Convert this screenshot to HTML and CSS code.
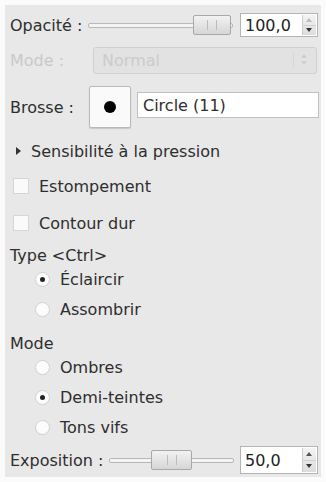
FILE: index.html
```html
<!DOCTYPE html>
<html>
<head>
<meta charset="utf-8">
<link rel="stylesheet" href="styles.css">
</head>
<body>
<div class="panel">
  <div class="row r-opacity">
    <span class="label">Opacité :</span>
    <div class="slider s-op">
      <div class="trough"></div>
      <div class="handle h-op"><span class="grip"></span></div>
    </div>
    <div class="spin">
      <span class="val">100,0</span>
      <div class="arrows"><span class="up"></span><span class="down"></span></div>
    </div>
  </div>
  <div class="row r-mode">
    <span class="label disabled">Mode :</span>
    <div class="combo"><span class="ctext">Normal</span><span class="carrow"></span></div>
  </div>
  <div class="row r-brush">
    <span class="label">Brosse :</span>
    <div class="brushbtn"><span class="dot"></span></div>
    <div class="entry">Circle (11)</div>
  </div>
  <div class="row r-expander">
    <span class="tri"></span><span>Sensibilité à la pression</span>
  </div>
  <div class="row r-check first"><span class="check"></span><span>Estompement</span></div>
  <div class="row r-check"><span class="check"></span><span>Contour dur</span></div>
  <div class="row r-head">Type &lt;Ctrl&gt;</div>
  <div class="row r-radio"><span class="radio on"></span><span>Éclaircir</span></div>
  <div class="row r-radio"><span class="radio"></span><span>Assombrir</span></div>
  <div class="row r-head h2">Mode</div>
  <div class="row r-radio"><span class="radio"></span><span>Ombres</span></div>
  <div class="row r-radio"><span class="radio on"></span><span>Demi-teintes</span></div>
  <div class="row r-radio"><span class="radio"></span><span>Tons vifs</span></div>
  <div class="row r-expo">
    <span class="label">Exposition :</span>
    <div class="slider s-ex">
      <div class="trough"></div>
      <div class="handle h-ex"><span class="grip"></span></div>
    </div>
    <div class="spin sp-ex">
      <span class="val">50,0</span>
      <div class="arrows"><span class="up"></span><span class="down"></span></div>
    </div>
  </div>
</div>
</body>
</html>
```
FILE: styles.css
```css
html, body { margin: 0; padding: 0; background: #fbfbfb; }
body { width: 326px; height: 482px; padding: 5px; box-sizing: border-box; }
.panel {
  background: #e8e8e8;
  height: 472px;
  box-sizing: border-box;
  padding: 8px 2px 0 5px;
  font-family: "DejaVu Sans", sans-serif;
  font-size: 16px;
  color: #2e2e2e;
  display: flex;
  flex-direction: column;
}
.row { display: flex; align-items: center; }
.label { white-space: nowrap; }
.disabled { color: #c8c8c8; }
.r-opacity { height: 24px; }
.slider { position: relative; height: 20px; }
.s-op { width: 145px; margin-left: 6px; }
.s-ex { width: 125px; margin-left: 6px; }
.trough {
  position: absolute; left: 0; right: 0; top: 8px; height: 3px;
  border: 1px solid #b8b8b8; background: #f4f4f4; border-radius: 2px;
}
.handle {
  position: absolute; top: 0; height: 18px;
  border: 1px solid #a8a8a8; border-radius: 2px;
  background: linear-gradient(#f2f2f2, #d6d6d6);
  display: flex; align-items: center; justify-content: center;
}
.h-op { left: 105px; width: 36px; }
.h-ex { left: 42px; width: 39px; }
.grip { width: 8px; height: 10px; border-left: 1px solid #bbb; border-right: 1px solid #bbb; }
.spin {
  margin-left: auto; width: 78px; height: 24px; box-sizing: border-box;
  border: 1px solid #b4b4b4; background: #fff;
  display: flex; align-items: center; margin-right: 1px;
}
.sp-ex { height: 28px; }
.val { padding-left: 4px; flex: 1; color: #222; }
.arrows { width: 13px; align-self: stretch; display: flex; flex-direction: column; margin: 1px 1px 1px 0;
  background: linear-gradient(#f4f4f4, #dcdcdc); border-left: 1px solid #ccc; }
.arrows span { flex: 1; position: relative; }
.arrows .up { border-bottom: 1px solid #d0d0d0; }
.arrows .up::after { content: ""; position: absolute; left: 3px; top: 50%; margin-top: -2px;
  border-left: 3px solid transparent; border-right: 3px solid transparent; border-bottom: 4px solid #555; }
.arrows .down::after { content: ""; position: absolute; left: 3px; top: 50%; margin-top: -2px;
  border-left: 3px solid transparent; border-right: 3px solid transparent; border-top: 4px solid #333; }
.r-opacity .arrows .up::after { border-bottom-color: #bbb; }
.r-mode { height: 28px; margin-top: 9px; }
.combo {
  margin-left: 29px; flex: 1; height: 27px; box-sizing: border-box;
  border: 1px solid #d0d0d0; border-radius: 3px; background: #e2e2e2;
  display: flex; align-items: center; padding-left: 8px; margin-right: 2px;
}
.ctext { color: #cbcbcb; flex: 1; }
.carrow { width: 8px; height: 14px; margin-right: 8px; border-left: 1px solid #d6d6d6; padding-left: 6px; position: relative; }
.carrow::before { content: ""; position: absolute; left: 7px; top: 1px;
  border-left: 3px solid transparent; border-right: 3px solid transparent; border-bottom: 4px solid #cfcfcf; }
.carrow::after { content: ""; position: absolute; left: 7px; top: 8px;
  border-left: 3px solid transparent; border-right: 3px solid transparent; border-top: 4px solid #cfcfcf; }
.r-brush { height: 44px; margin-top: 11px; }
.brushbtn {
  width: 42px; height: 42px; box-sizing: border-box; margin-left: 15px;
  border: 1px solid #b8b8b8; border-radius: 2px; background: #fafafa;
  box-shadow: 0 1px 1px #c8c8c8;
  display: flex; align-items: center; justify-content: center;
}
.dot { width: 12px; height: 12px; border-radius: 50%; background: #000; }
.entry {
  margin-left: 6px; flex: 1; height: 26px; box-sizing: border-box;
  border: 1px solid #c0c0c0; background: #fff; padding-left: 5px;
  display: flex; align-items: center; margin-bottom: 4px;
}
.r-expander { height: 22px; margin-top: 11px; padding-left: 6px; }
.tri { width: 0; height: 0; border-top: 4px solid transparent; border-bottom: 4px solid transparent;
  border-left: 5px solid #333; margin-right: 10px; }
.r-check { height: 22px; margin-top: 15px; padding-left: 3px; }
.r-check.first { margin-top: 13px; }
.check { width: 16px; height: 16px; box-sizing: border-box; border: 1px solid #d6d6d6; background: #fafafa; margin-right: 10px; }
.r-head { height: 22px; margin-top: 10px; }
.r-head.h2 { margin-top: 13px; }
.r-radio { height: 22px; margin-top: 7px; padding-left: 25px; }
.r-head + .r-radio { margin-top: 2px; }
.r-radio + .r-radio { margin-top: 8px; }
.radio { width: 15px; height: 15px; border-radius: 50%; border: 1px solid #cfcfcf; background: #fcfcfc;
  margin-right: 10px; position: relative; box-sizing: border-box; }
.radio.on::after { content: ""; position: absolute; left: 4px; top: 4px; width: 5px; height: 5px; border-radius: 50%; background: #222; }
.r-expo { height: 28px; margin-top: 8px; }
.r-head.h2 { margin-top: 12px; }
.r-head.h2 + .r-radio { margin-top: 2px; }
```
